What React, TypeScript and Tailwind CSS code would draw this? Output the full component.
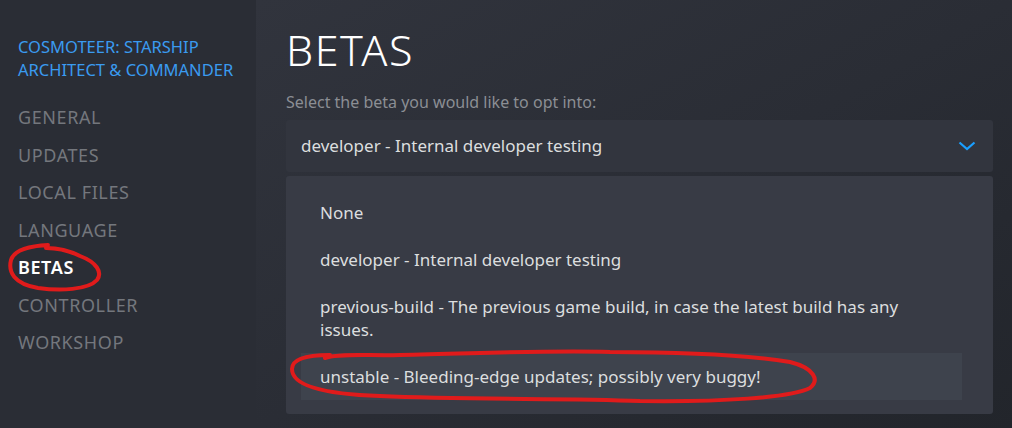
import React from "react";

const navItems = [
  "GENERAL",
  "UPDATES",
  "LOCAL FILES",
  "LANGUAGE",
  "BETAS",
  "CONTROLLER",
  "WORKSHOP",
];

const betaOptions = [
  "None",
  "developer - Internal developer testing",
  "previous-build - The previous game build, in case the latest build has any issues.",
  "unstable - Bleeding-edge updates; possibly very buggy!",
];

const App = () => {
  const active = "BETAS";
  const hovered = 3;

  return (
    <div
      className="relative flex h-[428px] w-[1012px] overflow-hidden"
      style={{ fontFamily: '"Noto Sans", "Open Sans", Arial, sans-serif' }}
    >
      {/* sidebar */}
      <div className="w-[256px] shrink-0 bg-[#2a2d35] pl-[18px] pt-[35px]">
        <div className="text-[16.5px] leading-[23px] text-[#3a9bf0]">
          COSMOTEER: STARSHIP
          <br />
          ARCHITECT &amp; COMMANDER
        </div>
        <div className="mt-[18px] flex flex-col">
          {navItems.map((item) => (
            <div
              key={item}
              className={
                item === active
                  ? "h-[37.5px] text-[18px] font-semibold leading-[37.5px] tracking-[0.6px] text-white"
                  : "h-[37.5px] text-[18px] leading-[37.5px] tracking-[0.6px] text-[#74777d]"
              }
            >
              {item}
            </div>
          ))}
        </div>
      </div>

      {/* main */}
      <div className="flex-1 bg-gradient-to-br from-[#31343d] via-[#2a2d35] to-[#22252b] pl-[30px] pr-[19px]">
        <h1 className="mt-[24px] text-[43px] font-light leading-[52px] tracking-[1.5px] text-white">
          BETAS
        </h1>
        <div className="mt-[14px] text-[16px] leading-[24px] text-[#8b8e94]">
          Select the beta you would like to opt into:
        </div>

        <div className="mt-[6px] flex h-[52px] items-center justify-between rounded-[3px] bg-[#32353e] pl-[15px] pr-[17px]">
          <span className="text-[17px] text-[#dcdedf]">
            developer - Internal developer testing
          </span>
          <svg width="18" height="10" viewBox="0 0 18 10" fill="none">
            <path
              d="M1.5 1.5 L9 8 L16.5 1.5"
              stroke="#1a9fff"
              strokeWidth="2.2"
            />
          </svg>
        </div>

        <div className="mt-[4px] rounded-[3px] bg-[#383b45] pb-[14px] pl-[15px] pr-[31px] pt-[13px]">
          {betaOptions.map((opt, i) => (
            <div
              key={opt}
              className={
                i === hovered
                  ? "bg-[#3e434d] py-[12px] pl-[19px] pr-[16px] text-[17px] leading-[23px] text-[#dcdedf]"
                  : "py-[12px] pl-[19px] pr-[16px] text-[17px] leading-[23px] text-[#dcdedf]"
              }
            >
              {opt}
            </div>
          ))}
        </div>
      </div>

      {/* hand-drawn red marks */}
      <svg
        className="pointer-events-none absolute left-0 top-0"
        width="1012"
        height="428"
        viewBox="0 0 1012 428"
        fill="none"
      >
        <path
          d="M48 245 C30 246 14 250 11 260 C8 272 14 284 38 288 C60 291 88 290 97 280 C103 272 96 262 80 256 C68 250 56 248 46 248"
          stroke="#e01b1b"
          strokeWidth="4"
          strokeLinecap="round"
        />
        <path
          d="M330 355 C310 355 292 358 292 369 C292 384 318 394 380 396 C470 400 560 398 640 401 C720 402 790 398 810 388 C820 380 814 368 790 362 C740 354 680 352 610 352 C540 350 470 354 400 355 C370 356 340 353 325 358"
          stroke="#e01b1b"
          strokeWidth="4"
          strokeLinecap="round"
        />
      </svg>
    </div>
  );
};

export default App;
